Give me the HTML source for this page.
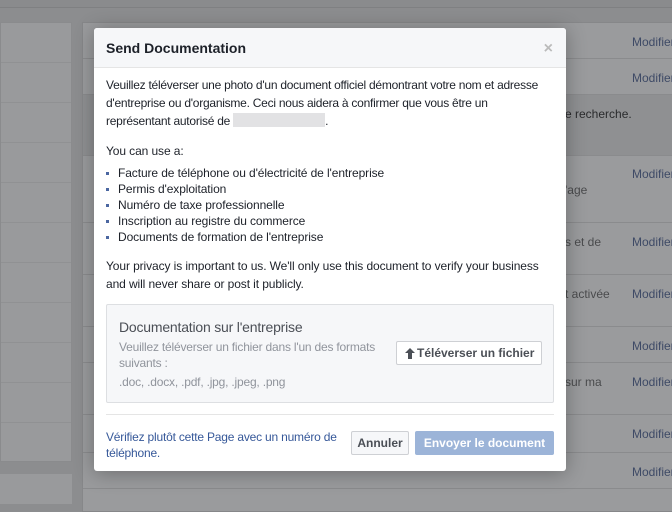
<!DOCTYPE html>
<html><head><meta charset="utf-8"><style>
*{margin:0;padding:0;box-sizing:border-box}
body{width:672px;height:500px;overflow:hidden;background:#8c8d8f;font-family:"Liberation Sans",Arial,sans-serif;position:relative}
.top{position:absolute;left:0;top:0;width:672px;height:8px;background:#8a8b8d;border-bottom:1px solid #7f8082}
.lp{position:absolute;left:0;top:22px;width:72px;height:440px;background:#999a9c;border:1px solid #8a8b8d}
.lp div{height:40px;border-bottom:1px solid #909193}
.lp2{position:absolute;left:0;top:474px;width:72px;height:30px;background:#999a9c}
.rp{position:absolute;left:82px;top:22px;width:620px;height:490px;background:#9a9b9d;border:1px solid #868789}
.row{position:absolute;left:0;width:620px;border-bottom:1px solid #8a8b8d}
.mod{position:absolute;left:549px;font-size:12px;color:#3e4a66}
.bt{position:absolute;font-size:12px;color:#2a2b2d}
.modal{position:absolute;left:94px;top:28px;width:472px;height:443px;background:#fff;border-radius:3px;box-shadow:0 2px 20px rgba(0,0,0,.3);color:#1d2129;font-size:12px}
.hd{height:40px;background:#f6f7f9;border-bottom:1px solid #e5e5e5;border-radius:3px 3px 0 0;padding:12px 12px;font-weight:bold;font-size:14px}
.x{position:absolute;right:13px;top:12px;color:#bbb;font-size:16px;font-weight:bold}
.bd{padding:0 12px;letter-spacing:-0.1px}
p{line-height:18px}
ul{list-style:none;margin-top:5px}
li{line-height:16px;padding-left:12px;position:relative}
li:before{content:"";position:absolute;left:0;top:7px;width:3px;height:3px;background:#4b67a1}
.box{margin-top:11px;height:99px;background:#f6f7f9;border:1px solid #dddfe2;border-radius:2px;position:relative;padding:14px 12px;letter-spacing:-0.2px}
.box h4{font-weight:normal;font-size:14px;color:#4b4f56}
.box .g{color:#90949c;font-size:12px;line-height:16px;margin-top:4px;width:275px}
.up{position:absolute;left:289px;top:36px;width:146px;height:24px;border:1px solid #ced0d4;background:#fff;border-radius:2px;font-weight:bold;color:#4b4f56;font-size:12px;line-height:22px;padding-left:20px;letter-spacing:0}
.up svg{position:absolute;left:8px;top:6px}
.ft{position:absolute;left:12px;right:12px;top:386px;border-top:1px solid #e5e5e5}
.lk{position:absolute;left:0;top:14px;color:#365899;line-height:16px;width:245px;letter-spacing:-0.2px}
.an{position:absolute;left:245px;top:16px;width:58px;height:24px;border:1px solid #ced0d4;background:#f6f7f9;border-radius:2px;font-weight:bold;color:#4b4f56;text-align:center;line-height:22px}
.en{position:absolute;left:309px;top:16px;width:139px;height:24px;background:#9cb4d8;border-radius:2px;font-weight:bold;color:#fff;text-align:center;line-height:24px}
</style></head><body>
<div class="top"></div>
<div class="lp"><div></div><div></div><div></div><div></div><div></div><div></div><div></div><div></div><div></div><div></div></div>
<div class="lp2"></div>
<div class="rp">
<div class="row" style="top:0;height:36px"></div>
<div class="row" style="top:36px;height:36px"></div>
<div class="row" style="top:72px;height:61px;background:#8f9092"></div>
<div class="row" style="top:133px;height:67px"></div>
<div class="row" style="top:200px;height:52px"></div>
<div class="row" style="top:252px;height:52px"></div>
<div class="row" style="top:304px;height:36px"></div>
<div class="row" style="top:340px;height:52px"></div>
<div class="row" style="top:392px;height:38px"></div>
<div class="row" style="top:430px;height:36px"></div>
<div class="mod" style="top:12px">Modifier</div>
<div class="mod" style="top:48px">Modifier</div>
<div class="bt" style="left:482px;top:84px">e recherche.</div>
<div class="mod" style="top:144px">Modifier</div>
<div class="bt" style="left:482px;top:160px;color:#4a4b4d">'age</div>
<div class="mod" style="top:212px">Modifier</div>
<div class="bt" style="left:482px;top:212px;color:#4a4b4d">s et de</div>
<div class="mod" style="top:264px">Modifier</div>
<div class="bt" style="left:482px;top:264px;color:#4a4b4d">t activée</div>
<div class="mod" style="top:316px">Modifier</div>
<div class="mod" style="top:352px">Modifier</div>
<div class="bt" style="left:482px;top:352px;color:#4a4b4d">sur ma</div>
<div class="mod" style="top:404px">Modifier</div>
<div class="mod" style="top:442px">Modifier</div>
</div>
<div class="modal">
<div class="hd">Send Documentation</div><div class="x">×</div>
<div class="bd">
<p style="margin-top:8px;letter-spacing:-0.25px">Veuillez téléverser une photo d'un document officiel démontrant votre nom et adresse d'entreprise ou d'organisme. Ceci nous aidera à confirmer que vous être un représentant autorisé de <span style="display:inline-block;width:92px;height:14px;background:#e2e2e4;vertical-align:-2px"></span>.</p>
<p style="margin-top:12px">You can use a:</p>
<ul><li>Facture de téléphone ou d'électricité de l'entreprise</li><li>Permis d'exploitation</li><li>Numéro de taxe professionnelle</li><li>Inscription au registre du commerce</li><li>Documents de formation de l'entreprise</li></ul>
<p style="margin-top:12px">Your privacy is important to us. We'll only use this document to verify your business<br>and will never share or post it publicly.</p>
<div class="box"><h4>Documentation sur l'entreprise</h4>
<div class="g">Veuillez téléverser un fichier dans l'un des formats suivants :</div>
<div class="g" style="margin-top:3px">.doc, .docx, .pdf, .jpg, .jpeg, .png</div>
<div class="up"><svg width="10" height="11" viewBox="0 0 10 11"><path d="M5 0L10 5H7V11H3V5H0Z" fill="#4b4f56"/></svg>Téléverser un fichier</div>
</div>
</div>
<div class="ft"><div class="lk">Vérifiez plutôt cette Page avec un numéro de téléphone.</div><div class="an">Annuler</div><div class="en">Envoyer le document</div></div>
</div>
</body></html>
